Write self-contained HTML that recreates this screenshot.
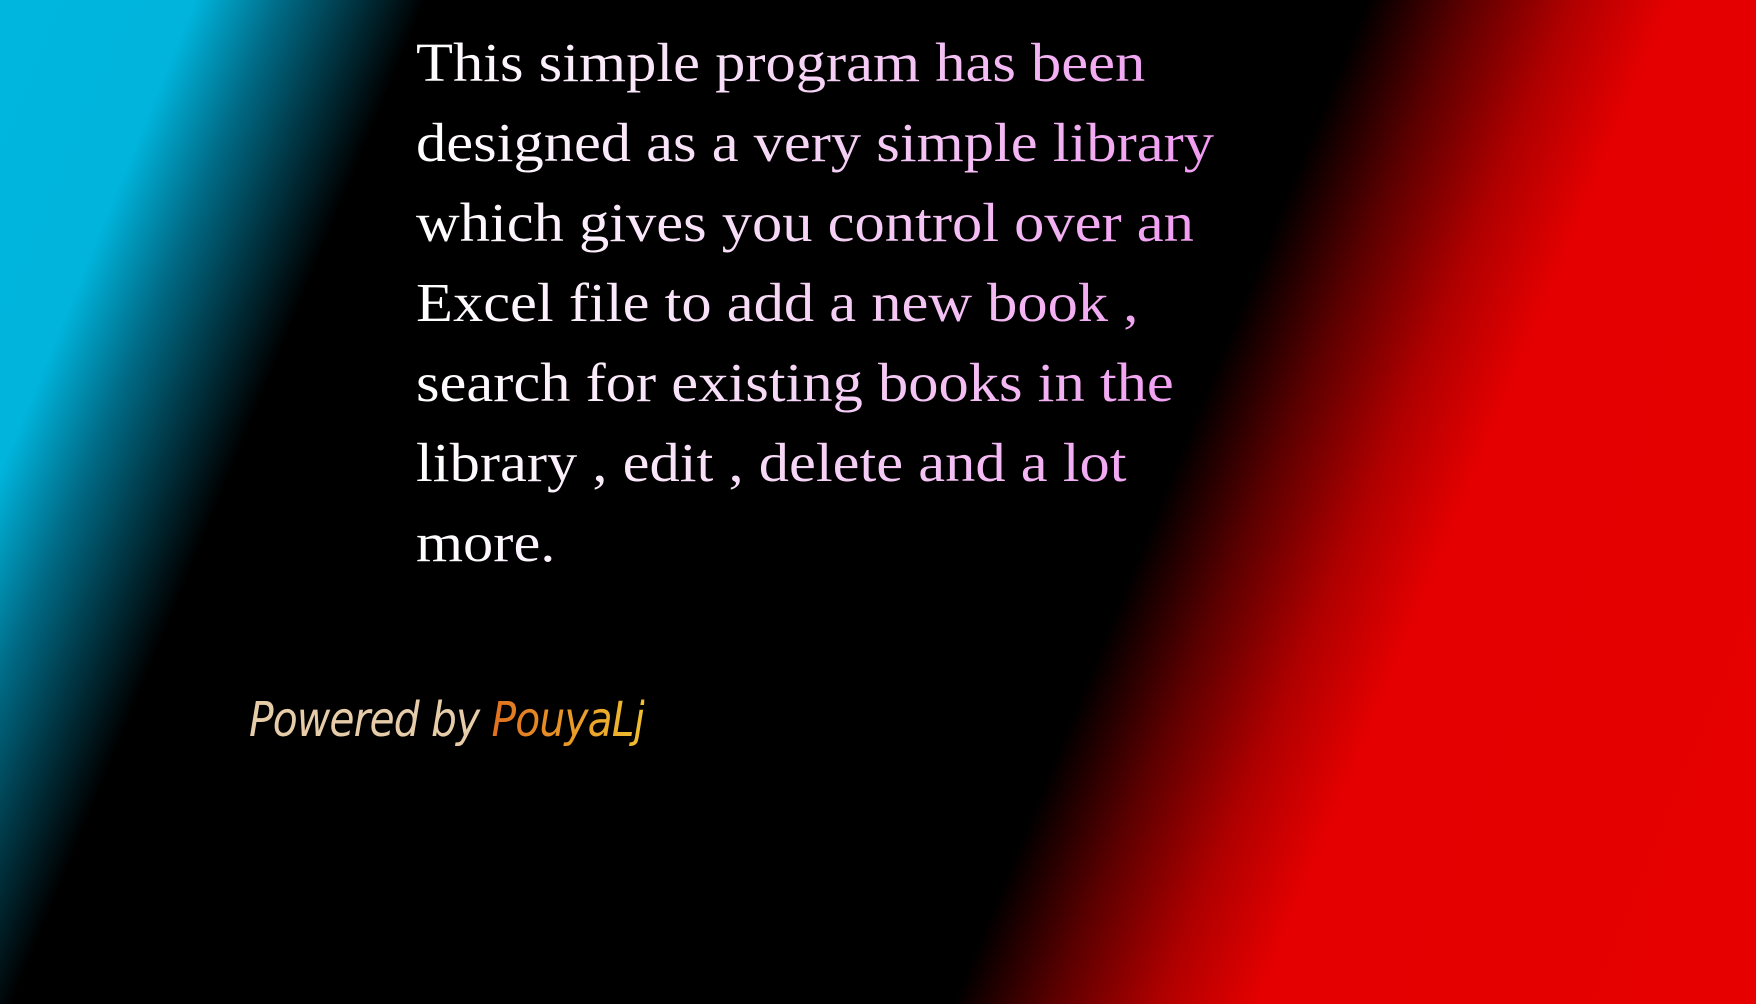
<!DOCTYPE html>
<html><head><meta charset="utf-8"><style>
html,body{margin:0;padding:0}
body{width:1756px;height:1004px;overflow:hidden;position:relative;
background:linear-gradient(112.4deg,#00b6de 0%,#00b4dc 9%,#006a85 13%,#000 19.6%,#000 63%,#5a0000 67.5%,#b00000 72.5%,#e40000 77%,#e60000 100%);}
.t{position:absolute;left:416px;top:23px;font-family:"Liberation Serif",serif;font-size:55px;line-height:80px;white-space:nowrap;transform:scaleX(1.1);transform-origin:left;
background:linear-gradient(90deg,#fff 0%,#f6d8f6 40%,#f08cf0 100%);-webkit-background-clip:text;background-clip:text;color:transparent;width:820px}
.p{position:absolute;left:249px;top:692px;font-family:"DejaVu Sans",sans-serif;font-style:italic;font-size:48px;white-space:nowrap;letter-spacing:-1px;transform:scaleX(0.85);transform-origin:left}
.a{color:#e6cca8}
.b{background:linear-gradient(90deg,#e07020,#f0c030);-webkit-background-clip:text;background-clip:text;color:transparent}
</style></head><body>
<div class="t">This simple program has been<br>designed as a very simple library<br>which gives you control over an<br>Excel file to add a new book ,<br>search for existing books in the<br>library , edit , delete and a lot<br>more.</div>
<div class="p"><span class="a">Powered by </span><span class="b">PouyaLj</span></div>
</body></html>
